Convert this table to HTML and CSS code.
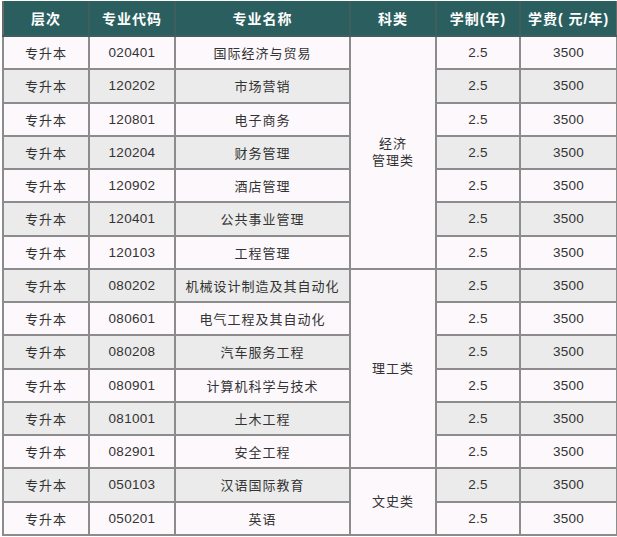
FILE: index.html
```html
<!DOCTYPE html>
<html lang="zh">
<head>
<meta charset="utf-8">
<link rel="stylesheet" href="styles.css">
</head>
<body>
<table class="majors">
  <colgroup>
    <col class="c1"><col class="c2"><col class="c3"><col class="c4"><col class="c5"><col class="c6">
  </colgroup>
  <thead>
    <tr><th>层次</th><th>专业代码</th><th>专业名称</th><th>科类</th><th>学制(年)</th><th>学费( 元/年)</th></tr>
  </thead>
  <tbody>
    <tr class="odd"><td>专升本</td><td class="num">020401</td><td>国际经济与贸易</td><td class="cat" rowspan="7">经济<br>管理类</td><td class="num">2.5</td><td class="num">3500</td></tr>
    <tr class="even"><td>专升本</td><td class="num">120202</td><td>市场营销</td><td class="num">2.5</td><td class="num">3500</td></tr>
    <tr class="odd"><td>专升本</td><td class="num">120801</td><td>电子商务</td><td class="num">2.5</td><td class="num">3500</td></tr>
    <tr class="even"><td>专升本</td><td class="num">120204</td><td>财务管理</td><td class="num">2.5</td><td class="num">3500</td></tr>
    <tr class="odd"><td>专升本</td><td class="num">120902</td><td>酒店管理</td><td class="num">2.5</td><td class="num">3500</td></tr>
    <tr class="even"><td>专升本</td><td class="num">120401</td><td>公共事业管理</td><td class="num">2.5</td><td class="num">3500</td></tr>
    <tr class="odd"><td>专升本</td><td class="num">120103</td><td>工程管理</td><td class="num">2.5</td><td class="num">3500</td></tr>
    <tr class="even"><td>专升本</td><td class="num">080202</td><td>机械设计制造及其自动化</td><td class="cat" rowspan="6">理工类</td><td class="num">2.5</td><td class="num">3500</td></tr>
    <tr class="odd"><td>专升本</td><td class="num">080601</td><td>电气工程及其自动化</td><td class="num">2.5</td><td class="num">3500</td></tr>
    <tr class="even"><td>专升本</td><td class="num">080208</td><td>汽车服务工程</td><td class="num">2.5</td><td class="num">3500</td></tr>
    <tr class="odd"><td>专升本</td><td class="num">080901</td><td>计算机科学与技术</td><td class="num">2.5</td><td class="num">3500</td></tr>
    <tr class="even"><td>专升本</td><td class="num">081001</td><td>土木工程</td><td class="num">2.5</td><td class="num">3500</td></tr>
    <tr class="odd"><td>专升本</td><td class="num">082901</td><td>安全工程</td><td class="num">2.5</td><td class="num">3500</td></tr>
    <tr class="even"><td>专升本</td><td class="num">050103</td><td>汉语国际教育</td><td class="cat" rowspan="2">文史类</td><td class="num">2.5</td><td class="num">3500</td></tr>
    <tr class="odd"><td>专升本</td><td class="num">050201</td><td>英语</td><td class="num">2.5</td><td class="num">3500</td></tr>
  </tbody>
</table>
</body>
</html>
```

FILE: styles.css
```css
html, body {
  margin: 0;
  padding: 0;
  background: #ffffff;
}
body {
  padding: 1px 1px 0 2px;
}
.majors {
  border-collapse: collapse;
  table-layout: fixed;
  width: 614px;
  font-family: "Liberation Sans", "Noto Sans CJK SC", sans-serif;
  color: #333333;
}
.c1 { width: 86px; }
.c2 { width: 86px; }
.c3 { width: 175px; }
.c4 { width: 86px; }
.c5 { width: 84px; }
.c6 { width: 97px; }
.majors th {
  background: #2b5f5f;
  color: #ffffff;
  font-size: 14px;
  font-weight: bold;
  letter-spacing: 1px;
  height: 34px;
  padding: 0;
  border: 2px solid #3f5f5f;
  border-top: 0;
  text-align: center;
  vertical-align: middle;
}
.majors th:first-child { border-left: 2px solid #6a6a6a; }
.majors th:last-child { border-right: 2px solid #6a6a6a; }
.majors td {
  height: 31.25px;
  padding: 0;
  border: 2px solid #8c8c8c;
  text-align: center;
  vertical-align: middle;
  font-size: 13px;
  letter-spacing: 1px;
}
.majors td.num {
  letter-spacing: 0.3px;
  font-size: 13.5px;
}
.odd td { background: #fcf8fc; }
.even td { background: #ebebeb; }
.majors td.cat {
  background: #fcf8fc;
  line-height: 17px;
}
```
